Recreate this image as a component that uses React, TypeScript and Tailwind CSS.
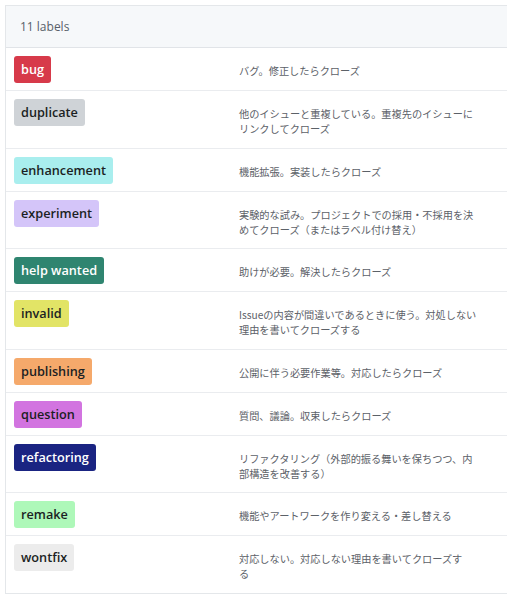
import React from "react";

type Label = { name: string; bg: string; fg: string; desc: string[] };

const labels: Label[] = [
  { name: "bug", bg: "bg-[#d73a4a]", fg: "text-white", desc: ["バグ。修正したらクローズ"] },
  { name: "duplicate", bg: "bg-[#cfd3d7]", fg: "text-[#1b1f23]", desc: ["他のイシューと重複している。重複先のイシューに", "リンクしてクローズ"] },
  { name: "enhancement", bg: "bg-[#a9eeee]", fg: "text-[#1b1f23]", desc: ["機能拡張。実装したらクローズ"] },
  { name: "experiment", bg: "bg-[#d4c5f9]", fg: "text-[#1b1f23]", desc: ["実験的な試み。プロジェクトでの採用・不採用を決", "めてクローズ（またはラベル付け替え）"] },
  { name: "help wanted", bg: "bg-[#2f8570]", fg: "text-white", desc: ["助けが必要。解決したらクローズ"] },
  { name: "invalid", bg: "bg-[#e2e466]", fg: "text-[#1b1f23]", desc: ["Issueの内容が間違いであるときに使う。対処しない", "理由を書いてクローズする"] },
  { name: "publishing", bg: "bg-[#f5a96b]", fg: "text-[#1b1f23]", desc: ["公開に伴う必要作業等。対応したらクローズ"] },
  { name: "question", bg: "bg-[#d274e0]", fg: "text-[#1b1f23]", desc: ["質問、議論。収束したらクローズ"] },
  { name: "refactoring", bg: "bg-[#1a2482]", fg: "text-white", desc: ["リファクタリング（外部的振る舞いを保ちつつ、内", "部構造を改善する）"] },
  { name: "remake", bg: "bg-[#aef8b9]", fg: "text-[#1b1f23]", desc: ["機能やアートワークを作り変える・差し替える"] },
  { name: "wontfix", bg: "bg-[#ececec]", fg: "text-[#1b1f23]", desc: ["対応しない。対応しない理由を書いてクローズす", "る"] },
];

export default function App() {
  return (
    <div className="w-[507px] h-[600px] bg-white overflow-hidden pl-[5px] pt-[5px]" style={{ fontFamily: '"Open Sans", "Noto Sans CJK JP", sans-serif' }}>
      <div className="border-l border-t border-b border-[#e4e7ea]">
        <div className="h-[42px] bg-[#f6f8fa] border-b border-[#e1e4e8] flex items-center pl-[14px] text-[12px] text-[#586069]">
          11 labels
        </div>
        {labels.map((l, i) => (
          <div key={l.name} className={`flex pl-[8px] pt-[8px] pb-[7px] ${i < labels.length - 1 ? "border-b border-[#eaecef]" : ""}`}>
            <div className="w-[225px] shrink-0">
              <span className={`inline-flex items-center h-[27px] px-[7px] rounded-[3px] text-[12.7px] font-semibold ${l.bg} ${l.fg}`}>
                {l.name}
              </span>
            </div>
            <div className="pt-[7px] pb-[4.5px] text-[10.2px] leading-[15px] text-[#5c6168] whitespace-nowrap" style={{ fontFamily: '"Noto Sans CJK JP", sans-serif' }}>
              {l.desc.map((d, j) => (
                <div key={j}>{d}</div>
              ))}
            </div>
          </div>
        ))}
      </div>
    </div>
  );
}
